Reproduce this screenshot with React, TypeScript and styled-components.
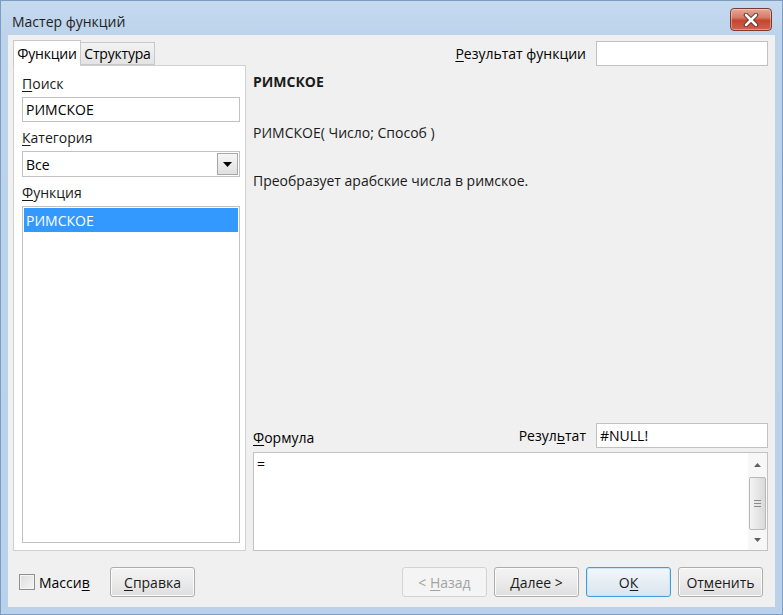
import React from "react";
import styled, { createGlobalStyle } from "styled-components";

const Global = createGlobalStyle`
  html, body { margin: 0; padding: 0; width: 783px; height: 615px; overflow: hidden; }
  body { font-family: "Open Sans", "Noto Sans", sans-serif; font-size: 14px; color: #000; }
  * { box-sizing: border-box; }
`;

const Window = styled.div`
  width: 783px;
  height: 615px;
  display: flex;
  flex-direction: column;
  border: 1px solid #7d9cc1;
  padding: 0 7px 7px 7px;
  background: linear-gradient(#c6daef 0px, #bcd3eb 34px, #b9d1ea 100%);
`;

const TitleBar = styled.div`
  height: 34px;
  display: flex;
  align-items: flex-start;
  justify-content: space-between;
`;

const Title = styled.div`
  margin: 11px 0 0 4px;
  font-size: 14px;
  line-height: 20px;
  color: #1e1e1e;
`;

const CloseBtn = styled.div`
  width: 42px;
  height: 23px;
  margin: 7px 3px 0 0;
  border: 1px solid #7a3a30;
  border-radius: 4px;
  background: linear-gradient(#e6a898 0%, #d77b68 40%, #c4462f 55%, #d0634c 100%);
  box-shadow: inset 0 0 0 1px rgba(255, 255, 255, 0.35);
  display: flex;
  align-items: center;
  justify-content: center;
`;

const Body = styled.div`
  flex: 1;
  display: flex;
  flex-direction: column;
  background: #f0f0f0;
`;

const Main = styled.div`
  flex: 1;
  display: flex;
  gap: 7px;
  padding: 5px 7px 0 5px;
  min-height: 0;
`;

const LeftCol = styled.div`
  width: 233px;
  display: flex;
  flex-direction: column;
`;

const TabStrip = styled.div`
  height: 25px;
  display: flex;
  align-items: flex-end;
  position: relative;
  z-index: 1;
`;

const Tab = styled.div<{ $active?: boolean }>`
  height: ${(p) => (p.$active ? "26px" : "23px")};
  margin-bottom: ${(p) => (p.$active ? "-1px" : "0")};
  width: ${(p) => (p.$active ? "68px" : "75px")};
  margin-left: ${(p) => (p.$active ? "0" : "-1px")};
  border: 1px solid #c8c8c8;
  border-bottom: ${(p) => (p.$active ? "none" : "1px solid #c8c8c8")};
  background: ${(p) => (p.$active ? "#ffffff" : "linear-gradient(#f3f3f3, #e3e3e3)")};
  display: flex;
  align-items: center;
  justify-content: center;
  line-height: 20px;
  white-space: nowrap;
  letter-spacing: -0.2px;
`;

const Panel = styled.div`
  flex: 1;
  background: #ffffff;
  border: 1px solid #d0d0d0;
  display: flex;
  flex-direction: column;
  padding: 8px 5px 7px 8px;
`;

const FieldLabel = styled.div<{ $first?: boolean }>`
  line-height: 20px;
  margin-top: ${(p) => (p.$first ? "0" : "6px")};
  margin-bottom: 3px;
  color: #1a1a1a;
`;

const Acc = styled.span`
  text-decoration: underline;
  text-underline-offset: 2px;
`;

const TextBox = styled.div<{ $w?: number }>`
  height: 25px;
  width: ${(p) => (p.$w ? `${p.$w}px` : "auto")};
  border: 1px solid #c2c2c2;
  background: #fff;
  padding: 0 3px;
  display: flex;
  align-items: center;
  white-space: nowrap;
`;

const Select = styled.div`
  height: 26px;
  border: 1px solid #c2c2c2;
  background: #fff;
  display: flex;
  align-items: stretch;
`;

const SelectValue = styled.div`
  flex: 1;
  padding: 0 3px;
  display: flex;
  align-items: center;
`;

const DropBtn = styled.div`
  width: 21px;
  margin: 1px;
  border: 1px solid #a8a8a8;
  background: linear-gradient(#f6f6f6, #e0e0e0);
  display: flex;
  align-items: center;
  justify-content: center;
`;

const ListBox = styled.div`
  flex: 1;
  border: 1px solid #c2c2c2;
  background: #fff;
  padding: 1px;
`;

const ListRow = styled.div<{ $selected?: boolean }>`
  height: 24px;
  padding-left: 2px;
  display: flex;
  align-items: center;
  background: ${(p) => (p.$selected ? "#3399ff" : "transparent")};
  color: ${(p) => (p.$selected ? "#ffffff" : "#000")};
`;

const RightCol = styled.div`
  flex: 1;
  display: flex;
  flex-direction: column;
  min-width: 0;
`;

const ResultRow = styled.div`
  height: 25px;
  display: flex;
  justify-content: flex-end;
  align-items: center;
  gap: 10px;
  margin-top: 1px;
`;

const InfoLine = styled.div<{ $gap: number; $bold?: boolean }>`
  line-height: 20px;
  margin-top: ${(p) => p.$gap}px;
  font-weight: ${(p) => (p.$bold ? 700 : 400)};
  color: #1a1a1a;
`;

const Spacer = styled.div`
  flex: 1;
`;

const FormulaRow = styled.div`
  height: 25px;
  display: flex;
  align-items: flex-end;
  gap: 10px;
`;

const FormulaLabel = styled.div`
  flex: 1;
  line-height: 20px;
`;

const InlineLabel = styled.div`
  line-height: 20px;
  align-self: center;
`;

const FormulaBox = styled.div`
  height: 99px;
  margin-top: 4px;
  border: 1px solid #c2c2c2;
  background: #fff;
  display: flex;
`;

const FormulaText = styled.div`
  flex: 1;
  padding: 2px 3px;
  line-height: 18px;
`;

const ScrollBar = styled.div`
  width: 19px;
  display: flex;
  flex-direction: column;
  align-items: stretch;
  background: #f7f7f7;
`;

const ScrollArrow = styled.div<{ $h: number }>`
  height: ${(p) => p.$h}px;
  display: flex;
  align-items: center;
  justify-content: center;
`;

const Thumb = styled.div`
  height: 53px;
  margin: 1px 1px 0 1px;
  border: 1px solid #b9b9b9;
  border-radius: 2px;
  background: linear-gradient(90deg, #f4f4f4, #e6e6e6 50%, #d9d9d9);
  display: flex;
  flex-direction: column;
  align-items: center;
  justify-content: center;
  gap: 2px;
`;

const Grip = styled.div`
  width: 7px;
  height: 1px;
  background: #8a8a8a;
`;

const Footer = styled.div`
  display: flex;
  align-items: center;
  padding: 16px 12px 10px 11px;
`;

const CheckGroup = styled.div`
  width: 91px;
  display: flex;
  align-items: center;
  gap: 4px;
`;

const CheckBox = styled.div`
  width: 16px;
  height: 16px;
  border: 1px solid #8e8f8f;
  background: linear-gradient(135deg, #dcdcdc, #f5f5f5);
  box-shadow: inset 0 0 0 1px #f4f4f4;
`;

const ButtonGroup = styled.div`
  margin-left: auto;
  display: flex;
  gap: 7px;
`;

const Button = styled.div<{ $disabled?: boolean; $default?: boolean }>`
  width: 85px;
  height: 30px;
  border: 1px solid
    ${(p) => (p.$disabled ? "#d3d3d3" : p.$default ? "#3d9ee0" : "#acacac")};
  border-radius: 3px;
  background: ${(p) =>
    p.$disabled
      ? "#f4f4f4"
      : p.$default
      ? "linear-gradient(#f1f7fc, #e6eef5 50%, #dbe5ee)"
      : "linear-gradient(#f3f3f3, #ebebeb 50%, #dedede)"};
  box-shadow: ${(p) =>
    p.$default ? "inset 0 0 0 1px #c9e6f8" : p.$disabled ? "none" : "inset 0 0 0 1px #fbfbfb"};
  color: ${(p) => (p.$disabled ? "#a3a3a3" : "#1a1a1a")};
  display: flex;
  align-items: center;
  justify-content: center;
  white-space: nowrap;
`;

const CloseIcon = () => (
  <svg width="16" height="14" viewBox="0 0 16 14">
    <path d="M3 2 L13 12 M13 2 L3 12" stroke="#5b2a22" strokeWidth="4.5" strokeLinecap="round" />
    <path d="M3 2 L13 12 M13 2 L3 12" stroke="#ffffff" strokeWidth="2.6" strokeLinecap="round" />
  </svg>
);

const DownTriangle = ({ color = "#000", w = 9, h = 5 }: { color?: string; w?: number; h?: number }) => (
  <svg width={w} height={h} viewBox={`0 0 ${w} ${h}`}>
    <path d={`M0 0 L${w} 0 L${w / 2} ${h} Z`} fill={color} />
  </svg>
);

const UpTriangle = ({ color = "#000", w = 9, h = 5 }: { color?: string; w?: number; h?: number }) => (
  <svg width={w} height={h} viewBox={`0 0 ${w} ${h}`}>
    <path d={`M0 ${h} L${w} ${h} L${w / 2} 0 Z`} fill={color} />
  </svg>
);

export default function App() {
  return (
    <>
      <Global />
      <Window>
        <TitleBar>
          <Title>Мастер функций</Title>
          <CloseBtn>
            <CloseIcon />
          </CloseBtn>
        </TitleBar>
        <Body>
          <Main>
            <LeftCol>
              <TabStrip>
                <Tab $active>Функции</Tab>
                <Tab>Структура</Tab>
              </TabStrip>
              <Panel>
                <FieldLabel $first>
                  <Acc>П</Acc>оиск
                </FieldLabel>
                <TextBox>РИМСКОЕ</TextBox>
                <FieldLabel>
                  <Acc>К</Acc>атегория
                </FieldLabel>
                <Select>
                  <SelectValue>Все</SelectValue>
                  <DropBtn>
                    <DownTriangle w={9} h={5} />
                  </DropBtn>
                </Select>
                <FieldLabel>
                  <Acc>Ф</Acc>ункция
                </FieldLabel>
                <ListBox>
                  <ListRow $selected>РИМСКОЕ</ListRow>
                </ListBox>
              </Panel>
            </LeftCol>
            <RightCol>
              <ResultRow>
                <InlineLabel>
                  <Acc>Р</Acc>езультат функции
                </InlineLabel>
                <TextBox $w={172} />
              </ResultRow>
              <InfoLine $gap={6} $bold>
                РИМСКОЕ
              </InfoLine>
              <InfoLine $gap={31}>РИМСКОЕ( Число; Способ )</InfoLine>
              <InfoLine $gap={28}>Преобразует арабские числа в римское.</InfoLine>
              <Spacer />
              <FormulaRow>
                <FormulaLabel>
                  <Acc>Ф</Acc>ормула
                </FormulaLabel>
                <InlineLabel>
                  Резул<Acc>ь</Acc>тат
                </InlineLabel>
                <TextBox $w={172}>#NULL!</TextBox>
              </FormulaRow>
              <FormulaBox>
                <FormulaText>=</FormulaText>
                <ScrollBar>
                  <ScrollArrow $h={23}>
                    <UpTriangle color="#606060" w={7} h={4} />
                  </ScrollArrow>
                  <Thumb>
                    <Grip />
                    <Grip />
                    <Grip />
                  </Thumb>
                  <Spacer />
                  <ScrollArrow $h={20}>
                    <DownTriangle color="#606060" w={7} h={4} />
                  </ScrollArrow>
                </ScrollBar>
              </FormulaBox>
            </RightCol>
          </Main>
          <Footer>
            <CheckGroup>
              <CheckBox />
              <span>
                Масси<Acc>в</Acc>
              </span>
            </CheckGroup>
            <Button>
              <span>
                <Acc>С</Acc>правка
              </span>
            </Button>
            <ButtonGroup>
              <Button $disabled>
                <span>
                  &lt; <Acc>Н</Acc>азад
                </span>
              </Button>
              <Button>
                <span>
                  <Acc>Д</Acc>алее &gt;
                </span>
              </Button>
              <Button $default>
                <span>
                  О<Acc>К</Acc>
                </span>
              </Button>
              <Button>
                <span>
                  От<Acc>м</Acc>енить
                </span>
              </Button>
            </ButtonGroup>
          </Footer>
        </Body>
      </Window>
    </>
  );
}
